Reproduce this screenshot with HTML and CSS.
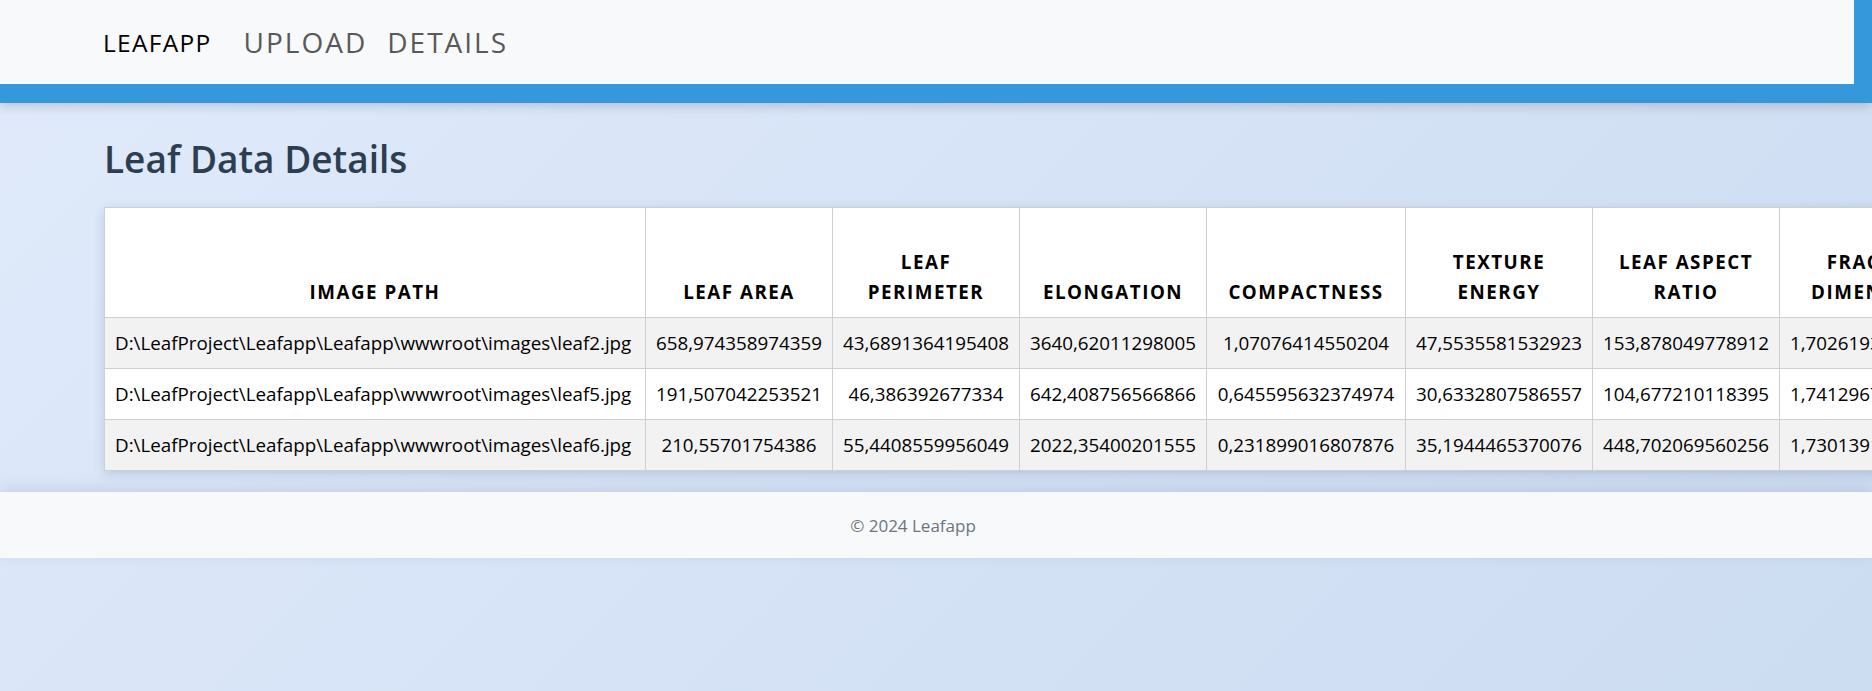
FILE: index.html
```html
<!DOCTYPE html>
<html lang="en">
<head>
<meta charset="utf-8">
<title>Leaf Data Details - Leafapp</title>
<link rel="stylesheet" href="styles.css">
</head>
<body>
<header class="site-header">
  <nav class="navbar">
    <a class="brand" href="#">LEAFAPP</a>
    <a class="nav-link" href="#">UPLOAD</a>
    <a class="nav-link" href="#">DETAILS</a>
  </nav>
</header>
<main class="content">
  <h1 class="page-title">Leaf Data Details</h1>
  <table class="data">
    <colgroup>
      <col class="c-path"><col class="c-num"><col class="c-num"><col class="c-num"><col class="c-wide"><col class="c-num"><col class="c-num"><col class="c-num">
    </colgroup>
    <thead>
      <tr>
        <th>Image Path</th>
        <th>Leaf Area</th>
        <th>Leaf Perimeter</th>
        <th>Elongation</th>
        <th>Compactness</th>
        <th>Texture Energy</th>
        <th>Leaf Aspect Ratio</th>
        <th>Fractal Dimension</th>
      </tr>
    </thead>
    <tbody>
      <tr>
        <td>D:\LeafProject\Leafapp\Leafapp\wwwroot\images\leaf2.jpg</td>
        <td>658,974358974359</td>
        <td>43,6891364195408</td>
        <td>3640,62011298005</td>
        <td>1,07076414550204</td>
        <td>47,5535581532923</td>
        <td>153,878049778912</td>
        <td>1,70261934521876</td>
      </tr>
      <tr>
        <td>D:\LeafProject\Leafapp\Leafapp\wwwroot\images\leaf5.jpg</td>
        <td>191,507042253521</td>
        <td>46,386392677334</td>
        <td>642,408756566866</td>
        <td>0,645595632374974</td>
        <td>30,6332807586557</td>
        <td>104,677210118395</td>
        <td>1,74129675128843</td>
      </tr>
      <tr>
        <td>D:\LeafProject\Leafapp\Leafapp\wwwroot\images\leaf6.jpg</td>
        <td>210,55701754386</td>
        <td>55,4408559956049</td>
        <td>2022,35400201555</td>
        <td>0,231899016807876</td>
        <td>35,1944465370076</td>
        <td>448,702069560256</td>
        <td>1,73013912054717</td>
      </tr>
    </tbody>
  </table>
</main>
<footer class="site-footer">
  <p class="copyright">© 2024 Leafapp</p>
</footer>
</body>
</html>
```
FILE: styles.css
```css
html, body {
  margin: 0;
  padding: 0;
}
html {
  overflow-x: hidden;
}
body {
  font-family: "Open Sans", "Noto Sans", sans-serif;
  color: #212529;
  min-height: 100vh;
  background: linear-gradient(135deg, #e0eafb 0%, #ccdcf1 100%);
  background-attachment: fixed;
  overflow-x: hidden;
}

.site-header {
  position: relative;
  z-index: 2;
  box-shadow: 0 3px 10px rgba(40, 60, 100, 0.22);
}
.navbar {
  display: flex;
  align-items: center;
  height: 84px;
  padding-left: 103px;
  background: #f8f9fa;
  border-bottom: 19px solid #3498db;
  border-right: 18px solid #3498db;
}
.brand {
  font-size: 24.5px;
  letter-spacing: 1.3px;
  color: #000;
  text-decoration: none;
  margin-right: 32px;
}
.nav-link {
  font-size: 28px;
  font-weight: 400;
  letter-spacing: 2px;
  color: #595959;
  text-decoration: none;
  margin-right: 20px;
}

.content {
  padding: 31px 0 21px 104px;
}
.page-title {
  margin: 0 0 24px;
  font-size: 37px;
  line-height: 49px;
  font-weight: 600;
  color: #2c3e50;
}

.data {
  table-layout: fixed;
  border-collapse: collapse;
  width: 1862px;
  background: #fff;
  box-shadow: 0 3px 10px rgba(40, 60, 100, 0.18);
  font-size: 18.8px;
  line-height: 30px;
  color: #000;
}
.c-path { width: 541px; }
.c-num { width: 187px; }
.c-wide { width: 199px; }
.data th,
.data td {
  border: 1px solid #cccfd3;
  padding: 10px 10px;
  text-align: center;
  white-space: nowrap;
}
.data thead tr {
  height: 110px;
}
.data th {
  vertical-align: bottom;
  text-transform: uppercase;
  font-weight: 700;
  letter-spacing: 1.5px;
  white-space: normal;
}
.data td:first-child {
  text-align: left;
}
.data tbody tr:nth-child(odd) td {
  background: #f2f2f2;
}

.site-footer {
  position: relative;
  height: 66px;
  display: flex;
  align-items: center;
  justify-content: center;
  padding-right: 46px;
  background: #f8f9fa;
  box-shadow: 0 -4px 14px rgba(40, 60, 100, 0.12);
}
.copyright {
  margin: 0;
  font-size: 17px;
  color: #6c757d;
}
```
